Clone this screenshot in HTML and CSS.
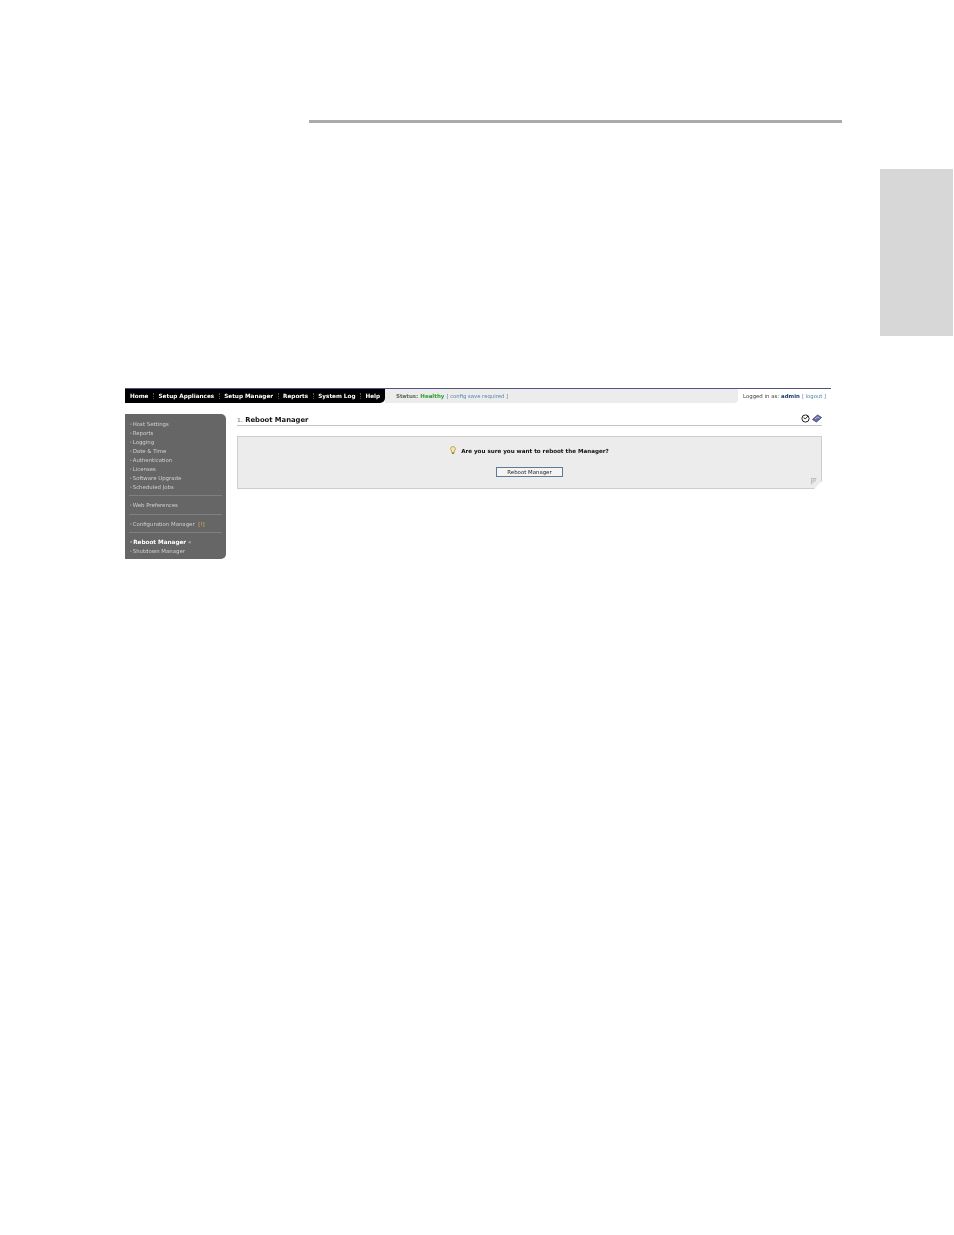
FILE: index.html
```html
<!DOCTYPE html>
<html lang="en">
<head>
  <meta charset="UTF-8">
  <meta name="viewport" content="width=device-width, initial-scale=1.0">
  <title>Reboot Manager</title>
  <link rel="stylesheet" href="styles.css">
</head>
<body>
  <div class="rule"></div>
  <div class="side-tab"></div>

  <div class="shot">
    <div class="topbar">
      <div class="nav">
        <a>Home</a>
        <a>Setup Appliances</a>
        <a>Setup Manager</a>
        <a>Reports</a>
        <a>System Log</a>
        <a>Help</a>
      </div>
      <div class="status">
        <b>Status:</b> <b class="healthy">Healthy</b> <span class="link">[ config save required ]</span>
      </div>
      <div class="login">Logged in as: <b>admin</b> <span class="link">[ logout ]</span></div>
    </div>

    <div class="content">
      <div class="sidebar">
        <ul class="menu tight">
          <li>Host Settings</li>
          <li>Reports</li>
          <li>Logging</li>
          <li>Date &amp; Time</li>
          <li>Authentication</li>
          <li>Licenses</li>
          <li>Software Upgrade</li>
          <li>Scheduled Jobs</li>
        </ul>
        <ul class="menu">
          <li>Web Preferences</li>
        </ul>
        <ul class="menu tight">
          <li>Configuration Manager <span class="count">[!]</span></li>
        </ul>
        <ul class="menu">
          <li class="active">Reboot Manager <span class="arrows">&laquo;</span></li>
          <li>Shutdown Manager</li>
        </ul>
      </div>

      <div class="main">
        <div class="title-row">
          <h1><span class="title-mark">1.</span> Reboot Manager</h1>
          <div class="title-icons">
            <svg width="9" height="9" viewBox="0 0 9 9">
              <circle cx="4.5" cy="4.5" r="3.6" fill="#fff" stroke="#222" stroke-width="1"/>
              <path d="M4.500 4.800L7 2M4.500 4.800L2.500 3.800" fill="none" stroke="#222" stroke-width="1"/>
            </svg>
            <svg width="10" height="9" viewBox="0 0 10 9">
              <path d="M0.500 5.500L5.500 1l4 2.500L4.500 8z" fill="#6a6aa8" stroke="#333a70" stroke-width="0.8"/>
              <path d="M3 5l2.500-2 2 1.200" fill="none" stroke="#e4e4f4" stroke-width="0.7"/>
            </svg>
          </div>
        </div>

        <div class="panel">
          <p class="question">
            <svg class="bulb" width="6" height="9" viewBox="0 0 6 9">
              <path d="M3 .5a2.400 2.400 0 0 1 1.300 4.400V6.500H1.700V4.900A2.400 2.400 0 0 1 3 .5z" fill="#f6e7a0" stroke="#a8892c" stroke-width=".7"/>
              <path d="M2 7.500h2" stroke="#777" stroke-width="1"/>
            </svg>
            Are you sure you want to reboot the Manager?
          </p>
          <div class="actions">
            <button class="btn">Reboot Manager</button>
          </div>
          <span class="fold"></span>
          <svg class="grip" width="7" height="7" viewBox="0 0 7 7">
            <path d="M.5 6.500V.5h5M2 5V2h3M3.500 3.500h1" fill="none" stroke="#b0b0b0" stroke-width=".8"/>
          </svg>
        </div>
      </div>
    </div>
  </div>
</body>
</html>
```

FILE: styles.css
```css
body {
  margin: 0;
  padding-top: 120px;
  background-color: #fff;
  font-family: "DejaVu Sans", Verdana, sans-serif;
  color: #222;
}

.rule {
  width: 533px;
  height: 3px;
  margin-left: 309px;
  background-color: #ababab;
}

.side-tab {
  width: 73px;
  height: 167px;
  margin: 46px 0 0 880px;
  background-color: #d7d7d7;
}

.shot {
  width: 706px;
  margin: 52px 0 0 125px;
  font-size: 5.400px;
  filter: blur(0.25px);
}

.topbar {
  display: flex;
  height: 14px;
  border-top: 1px solid #54547e;
}

.nav {
  display: flex;
  align-items: center;
  width: 260px;
  padding-left: 5px;
  box-sizing: border-box;
  background-color: #000;
  border-bottom-right-radius: 5px;
  color: #fff;
  font-size: 5.700px;
  font-weight: bold;
  white-space: nowrap;
}

.nav a {
  margin-right: 4px;
  padding-right: 5px;
  border-right: 1px dotted #555;
}

.nav a:last-child {
  border-right: none;
}

.status {
  display: flex;
  align-items: center;
  gap: 2px;
  width: 353px;
  padding-left: 11px;
  box-sizing: border-box;
  background-color: #ececec;
  border-bottom-right-radius: 4px;
  color: #5c6a5c;
  font-size: 5.500px;
  white-space: nowrap;
}

.healthy {
  color: #2f9e2f;
}

.link {
  color: #4f86a8;
  font-size: 5.300px;
}

.login {
  display: flex;
  align-items: center;
  gap: 2px;
  padding-left: 5px;
  color: #444;
  white-space: nowrap;
}

.login b {
  color: #1c3f66;
}

.content {
  display: flex;
}

.sidebar {
  width: 101px;
  height: 145px;
  margin-top: 11px;
  padding: 6px 4px 0;
  box-sizing: border-box;
  background-color: #666;
  border-radius: 0 5px 5px 0;
  color: #d0d0d0;
}

.menu {
  margin: 0 0 5px;
  padding: 0 0 4px;
  list-style: none;
  border-bottom: 1px solid #808080;
}

.menu.tight {
  padding-bottom: 3px;
}

.menu:last-child {
  margin-bottom: 0;
  border-bottom: none;
}

.menu li {
  height: 9px;
  line-height: 9px;
  padding-left: 1px;
  white-space: nowrap;
}

.menu li::before {
  content: "\00b7";
  margin-right: 1px;
  color: #fff;
}

.menu .active {
  color: #fff;
  font-size: 5.700px;
  font-weight: bold;
}

.count {
  margin-left: 2px;
  color: #d8b84a;
}

.arrows {
  font-weight: normal;
  color: #ccc;
}

.main {
  width: 585px;
  margin-left: 11px;
}

.title-row {
  display: flex;
  justify-content: space-between;
  align-items: flex-end;
  height: 22px;
  border-bottom: 1px solid #c4c4c4;
}

h1 {
  margin: 0;
  font-size: 6.800px;
  line-height: 9px;
  color: #111;
}

.title-mark {
  color: #999;
  font-size: 5.400px;
}

.title-icons {
  display: flex;
  gap: 2px;
  margin-bottom: 2px;
}

.panel {
  position: relative;
  height: 51px;
  margin-top: 10px;
  border: 1px solid #cdcdcd;
  background-color: #ececec;
  text-align: center;
}

.question {
  margin: 0;
  padding-top: 9px;
  height: 13px;
  line-height: 9px;
  font-size: 5.600px;
  font-weight: bold;
  color: #111;
  white-space: nowrap;
}

.bulb {
  margin-right: 3px;
  vertical-align: -2px;
}

.actions {
  padding-top: 8px;
}

.btn {
  width: 67px;
  height: 10px;
  padding: 0;
  border: 1px solid #5e7a96;
  background-color: #f4f4f4;
  color: #222;
  font-family: inherit;
  font-size: 5.400px;
  line-height: 7px;
}

/* folded corner at the bottom right of the panel */
.fold {
  position: absolute;
  right: -1px;
  bottom: -1px;
  width: 0;
  height: 0;
  border-left: 8px solid transparent;
  border-bottom: 8px solid #fff;
}

.grip {
  position: absolute;
  right: 3px;
  bottom: 3px;
}
```
